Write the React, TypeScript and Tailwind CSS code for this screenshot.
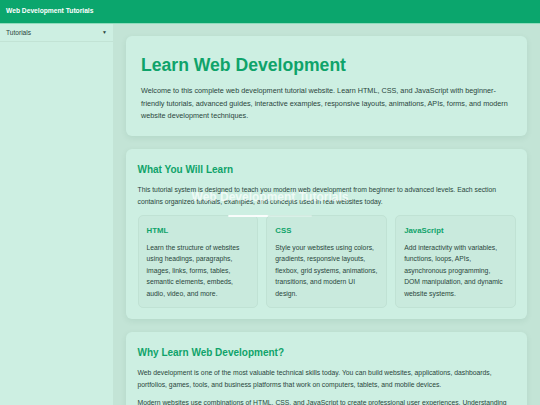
const TOPICS = [
  {
    title: "HTML",
    text: "Learn the structure of websites using headings, paragraphs, images, links, forms, tables, semantic elements, embeds, audio, video, and more.",
  },
  {
    title: "CSS",
    text: "Style your websites using colors, gradients, responsive layouts, flexbox, grid systems, animations, transitions, and modern UI design.",
  },
  {
    title: "JavaScript",
    text: "Add interactivity with variables, functions, loops, APIs, asynchronous programming, DOM manipulation, and dynamic website systems.",
  },
];

export default function App() {
  return (
    <div className="relative flex h-[405px] w-[540px] flex-col overflow-hidden bg-[#c3e4d6] font-['Liberation_Sans',Arial,sans-serif] text-[#2a463c]">
      <header className="flex h-[24px] shrink-0 items-center border-b border-[#8fdcbc] bg-[#0ba66d] px-[6px]">
        <span className="text-[6.7px] font-bold text-white">Web Development Tutorials</span>
      </header>

      <div className="flex min-h-0 flex-1">
        <aside className="w-[113px] shrink-0 bg-[#cdefe2]">
          <button className="flex h-[18px] w-full items-center justify-between border-b border-[#c2e3d5] px-[6px] text-[6.6px] text-[#2a463c]">
            <span>Tutorials</span>
            <span className="text-[5px]">▼</span>
          </button>
        </aside>

        <main className="flex min-w-0 flex-1 flex-col gap-[13px] px-[13px] pt-[12px]">
          <section className="rounded-[6px] bg-[#cdefe2] px-[15px] pb-[14px] pt-[16px] shadow-[0_2px_6px_rgba(0,80,50,0.08)]">
            <h1 className="text-[17.6px] font-bold text-[#0fa36a]">Learn Web Development</h1>
            <p className="mt-[7px] text-[7.25px] leading-[12.3px]">
              Welcome to this complete web development tutorial website. Learn HTML, CSS, and JavaScript with beginner-friendly tutorials, advanced guides, interactive examples, responsive layouts, animations, APIs, forms, and modern website development techniques.
            </p>
          </section>

          <section className="rounded-[6px] bg-[#cdefe2] px-[11.5px] pb-[11px] pt-[13px] shadow-[0_2px_6px_rgba(0,80,50,0.08)]">
            <h2 className="text-[10px] font-bold text-[#0fa36a]">What You Will Learn</h2>
            <p className="mt-[7px] text-[6.8px] leading-[11.5px]">
              This tutorial system is designed to teach you modern web development from beginner to advanced levels. Each section contains organized tutorials, examples, and concepts used in real websites today.
            </p>
            <div className="mt-[8px] grid grid-cols-3 gap-[8.5px]">
              {TOPICS.map((t) => (
                <div key={t.title} className="h-[93px] rounded-[5px] border border-[#c0e2d4] bg-[#c9eadd] px-[8px] pt-[9px]">
                  <h3 className="text-[7.8px] font-bold text-[#0fa36a]">{t.title}</h3>
                  <p className="mt-[5px] text-[6.8px] leading-[11.4px]">{t.text}</p>
                </div>
              ))}
            </div>
          </section>

          <section className="rounded-[6px] bg-[#cdefe2] px-[11.5px] pb-[11px] pt-[13px] shadow-[0_2px_6px_rgba(0,80,50,0.08)]">
            <h2 className="text-[10px] font-bold text-[#0fa36a]">Why Learn Web Development?</h2>
            <p className="mt-[7px] text-[6.8px] leading-[11.7px]">
              Web development is one of the most valuable technical skills today. You can build websites, applications, dashboards, portfolios, games, tools, and business platforms that work on computers, tablets, and mobile devices.
            </p>
            <p className="mt-[6px] text-[6.8px] leading-[11.7px]">
              Modern websites use combinations of HTML, CSS, and JavaScript to create professional user experiences. Understanding how these technologies work together helps you build fast, accessible and beautiful websites.
            </p>
          </section>
        </main>
      </div>

      {/* fading splash */}
      <div className="pointer-events-none absolute inset-0 flex flex-col items-center justify-center">
        <div className="text-[12px] font-bold text-white/70">Web Development Tutorials</div>
        <div className="mt-[9px] h-[2px] w-[84px] overflow-hidden rounded-full bg-white/30">
          <div className="h-full w-[40px] rounded-full bg-white/85" />
        </div>
      </div>
    </div>
  );
}
